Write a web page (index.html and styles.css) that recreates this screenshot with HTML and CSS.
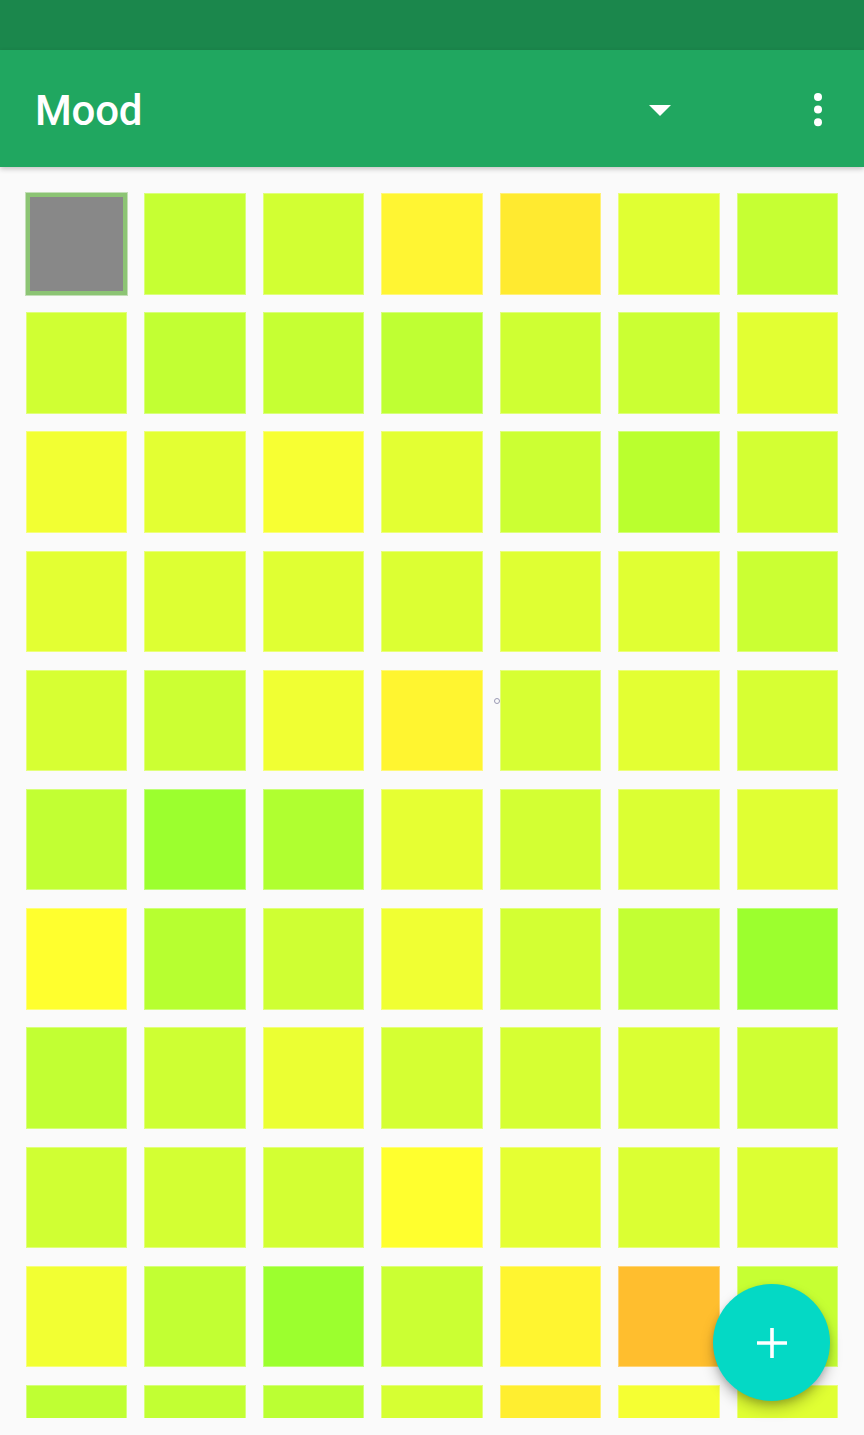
FILE: index.html
```html
<!DOCTYPE html>
<html>
<head>
<meta charset="UTF-8">
<title>Mood</title>
<link rel="stylesheet" href="styles.css">
</head>
<body>
<div class="screen">
  <div class="status-bar"></div>
  <div class="toolbar">
    <h1 class="title">Mood</h1>
    <div class="spacer"></div>
    <button class="icon-btn dropdown" aria-label="Select">
      <svg width="22" height="11" viewBox="0 0 22 11"><path d="M0 0 L22 0 L11 11 Z" fill="#fff"/></svg>
    </button>
    <button class="icon-btn overflow" aria-label="More">
      <svg width="10" height="36" viewBox="0 0 10 36"><circle cx="5" cy="5" r="4" fill="#fff"/><circle cx="5" cy="17.6" r="4" fill="#fff"/><circle cx="5" cy="30.2" r="4" fill="#fff"/></svg>
    </button>
  </div>

  <div class="content">
    <div class="grid" id="grid"></div>
    <span class="ring"></span>
  </div>

  <button class="fab" aria-label="Add">
    <svg width="32" height="32" viewBox="0 0 32 32"><path d="M16 1 V31 M1 16 H31" stroke="#fff" stroke-width="3.6"/></svg>
  </button>
</div>

<script>
// mood colours, row by row (first cell = today, empty)
const colors = [
  null, '#c6ff33', '#d2ff33', '#fff533', '#ffea30', '#e0ff33', '#c6ff33',
  '#d0ff33', '#c2ff33', '#c6ff33', '#bfff33', '#cfff33', '#cbff33', '#e2ff33',
  '#f2ff33', '#e3ff33', '#f7ff33', '#e3ff33', '#ccff33', '#baff2e', '#d3ff33',
  '#e3ff33', '#ddff33', '#e0ff33', '#dcff33', '#dfff33', '#e0ff33', '#cbff33',
  '#d7ff33', '#ccff33', '#f0ff33', '#fff530', '#d7ff33', '#e3ff33', '#d7ff33',
  '#c2ff33', '#9cff2e', '#b0ff30', '#e6ff33', '#d3ff33', '#dbff33', '#e0ff33',
  '#ffff2e', '#b7ff30', '#cfff33', '#f0ff33', '#d3ff33', '#c3ff33', '#9cff2e',
  '#c2ff33', '#ceff33', '#ebff33', '#d5ff33', '#d6ff33', '#daff33', '#cfff33',
  '#d0ff33', '#d3ff33', '#d3ff33', '#ffff2e', '#e5ff33', '#dbff33', '#dcff33',
  '#f2ff33', '#c2ff33', '#9cff2e', '#cbff33', '#fff530', '#ffbe2e', '#c6ff33',
  '#bfff33', '#c2ff33', '#bbff33', '#d6ff33', '#ffee30', '#f5ff33', '#e0ff33'
];

const grid = document.getElementById('grid');
colors.forEach(c => {
  const cell = document.createElement('div');
  cell.className = 'cell';
  if (c) cell.style.background = c;
  else cell.classList.add('today');
  grid.appendChild(cell);
});
</script>
</body>
</html>
```

FILE: styles.css
```css
html, body {
  margin: 0;
  padding: 0;
}
body {
  font-family: Roboto, "Noto Sans", sans-serif;
  background-color: #fafafa;
}
.screen {
  position: relative;
  width: 864px;
  height: 1435px;
  overflow: hidden;
  background: #fafafa;
}
.status-bar {
  height: 50px;
  background: #1b874c;
}
.toolbar {
  position: relative;
  z-index: 2;
  height: 117px;
  display: flex;
  align-items: center;
  padding: 0 0 0 35px;
  background: #20a760;
  box-shadow: 0 2px 5px rgba(0, 0, 0, 0.22);
}
.title {
  margin: 4px 0 0;
  color: #fff;
  font-size: 42px;
  font-weight: 500;
  letter-spacing: -0.2px;
  line-height: 1;
}
.spacer {
  flex: 1;
}
.icon-btn {
  background: none;
  border: none;
  padding: 0;
  display: flex;
  align-items: center;
  justify-content: center;
}
.dropdown {
  width: 22px;
  height: 40px;
  margin: 4px 142px 0 0;
}
.overflow {
  width: 10px;
  height: 40px;
  margin: 2px 41px 0 0;
}
.content {
  position: relative;
  height: 1251px;
  overflow: hidden;
}
.grid {
  display: grid;
  grid-template-columns: repeat(7, 1fr);
  grid-auto-rows: 101.5px;
  column-gap: 17px;
  row-gap: 17.7px;
  padding: 26px 26px 0;
}
.cell {
  box-shadow: inset 0 0 0 1px rgba(255, 255, 255, 0.35);
}
.cell.today {
  background: #888888;
  border: 4px solid #8cc474;
  box-shadow: 0 0 0 1px rgba(140, 196, 116, 0.5);
}
.ring {
  position: absolute;
  left: 494px;
  top: 531px;
  width: 4px;
  height: 4px;
  border: 1px solid #9a9ab4;
  border-radius: 50%;
}
.fab {
  position: absolute;
  right: 34px;
  bottom: 34px;
  width: 117px;
  height: 117px;
  border: none;
  border-radius: 50%;
  background: #04d9c5;
  display: flex;
  align-items: center;
  justify-content: center;
  box-shadow: 0 8px 14px rgba(0, 0, 0, 0.22), 0 3px 6px rgba(0, 0, 0, 0.15);
}
```
